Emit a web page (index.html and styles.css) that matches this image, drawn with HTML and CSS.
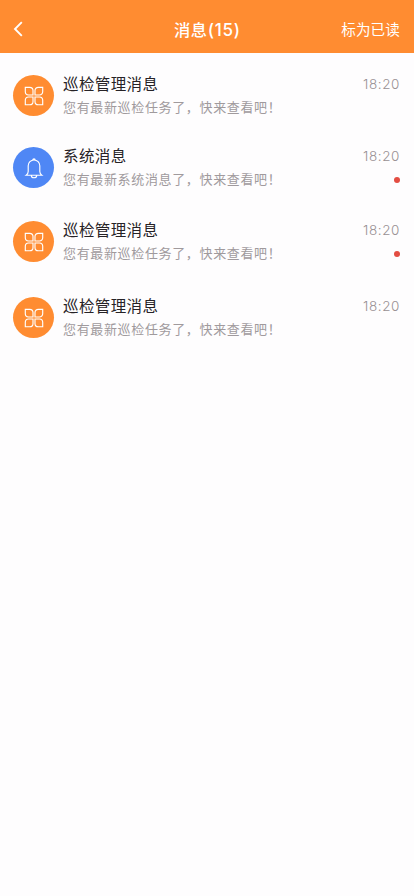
FILE: index.html
```html
<!DOCTYPE html>
<html lang="zh-CN">
<head>
<meta charset="utf-8">
<meta name="viewport" content="width=device-width, initial-scale=1">
<title>消息</title>
<link rel="stylesheet" href="styles.css">
</head>
<body>
<svg width="0" height="0" class="defs">
  <symbol id="petals" viewBox="0 0 20 20">
    <path d="M9 9H4.6A3.4 3.4 0 0 1 1.3 5.7V1.3H5.7A3.3 3.3 0 0 1 9 4.6ZM11 9V4.6a3.3 3.3 0 0 1 3.3-3.3h4.4v4.4A3.3 3.3 0 0 1 15.4 9ZM9 11v4.4a3.3 3.3 0 0 1-3.3 3.3H1.3v-4.4A3.3 3.3 0 0 1 4.6 11ZM11 11h4.4a3.3 3.3 0 0 1 3.3 3.3v4.4h-4.4a3.3 3.3 0 0 1-3.3-3.3Z"/>
  </symbol>
</svg>
<header class="bar">
  <svg class="back" viewBox="0 0 10 16"><path d="M8.8 1.2 2 8l6.8 6.8"/></svg>
  <h1 class="title">消息<span class="count">(15)</span></h1>
  <span class="action">标为已读</span>
</header>
<main class="list">
  <article class="item first">
    <div class="avatar"><svg class="icon"><use href="#petals"/></svg></div>
    <div class="body"><h2 class="name">巡检管理消息</h2><p class="text">您有最新巡检任务了，快来查看吧！</p></div>
    <div class="meta"><time>18:20</time></div>
  </article>
  <article class="item second">
    <div class="avatar blue"><svg class="icon bell" viewBox="0 0 20 22"><path d="M2.2 18.2c1.4-1 2-2 2-3.6V8.8a5.8 5.8 0 0 1 11.6 0v5.8c0 1.6.6 2.6 2 3.6ZM8.8 3a1.2 1.2 0 0 1 2.4 0M7.3 18.4a2.7 2.3 0 0 0 5.4 0"/></svg></div>
    <div class="body"><h2 class="name">系统消息</h2><p class="text">您有最新系统消息了，快来查看吧！</p></div>
    <div class="meta"><time>18:20</time><i class="dot"></i></div>
  </article>
  <article class="item third">
    <div class="avatar"><svg class="icon"><use href="#petals"/></svg></div>
    <div class="body"><h2 class="name">巡检管理消息</h2><p class="text">您有最新巡检任务了，快来查看吧！</p></div>
    <div class="meta"><time>18:20</time><i class="dot"></i></div>
  </article>
  <article class="item">
    <div class="avatar"><svg class="icon"><use href="#petals"/></svg></div>
    <div class="body"><h2 class="name">巡检管理消息</h2><p class="text">您有最新巡检任务了，快来查看吧！</p></div>
    <div class="meta"><time>18:20</time></div>
  </article>
</main>
</body>
</html>
```
FILE: styles.css
```css
* { box-sizing: border-box; margin: 0; padding: 0; }
body { min-height: 896px; background: #fefdfe; font-family: "Noto Sans CJK SC", sans-serif; }
.defs { display: block; height: 0; }
.bar { display: grid; grid-template-columns: 1fr auto 1fr; align-items: center; height: 53px; padding: 5px 14px 0 13px; background: #ff8c31; color: #fff; }
.back { width: 10px; height: 16px; fill: none; stroke: #fff; stroke-width: 1.9; }
.title { margin-left: 2px; font-size: 16.3px; line-height: 24px; font-weight: 500; letter-spacing: .5px; }
.count { font-family: Inter, sans-serif; font-size: 17px; letter-spacing: .8px; }
.action { justify-self: end; font-size: 14.6px; line-height: 22px; letter-spacing: .1px; }
.list { padding: 22px 14px 0 13px; }
.item { display: flex; height: 42px; margin-bottom: 33px; }
.first { margin-bottom: 30px; }
.second { margin-bottom: 32px; }
.third { margin-bottom: 34px; }
.avatar { display: flex; align-items: center; justify-content: center; width: 41px; height: 41px; border-radius: 50%; background: #ff8c31; }
.blue { background: #4f87f5; }
.icon { width: 20px; height: 20px; fill: none; stroke: #fff; stroke-width: 1.15; }
.bell { height: 22px; }
.body { flex: 1; margin-top: -1px; margin-left: 9px; }
.name { color: #262226; font-size: 15.5px; line-height: 19px; font-weight: 400; letter-spacing: .4px; }
.text { margin-top: 4px; color: #a09a9d; font-size: 13px; line-height: 20px; letter-spacing: .65px; white-space: nowrap; }
.meta { display: flex; flex-direction: column; align-items: flex-end; margin-top: -1px; color: #989093; font-family: Inter, sans-serif; font-size: 13.5px; font-weight: 300; line-height: 20px; letter-spacing: .6px; }
.dot { width: 6px; height: 6px; margin-top: 11px; border-radius: 50%; background: #e34d42; }
```
